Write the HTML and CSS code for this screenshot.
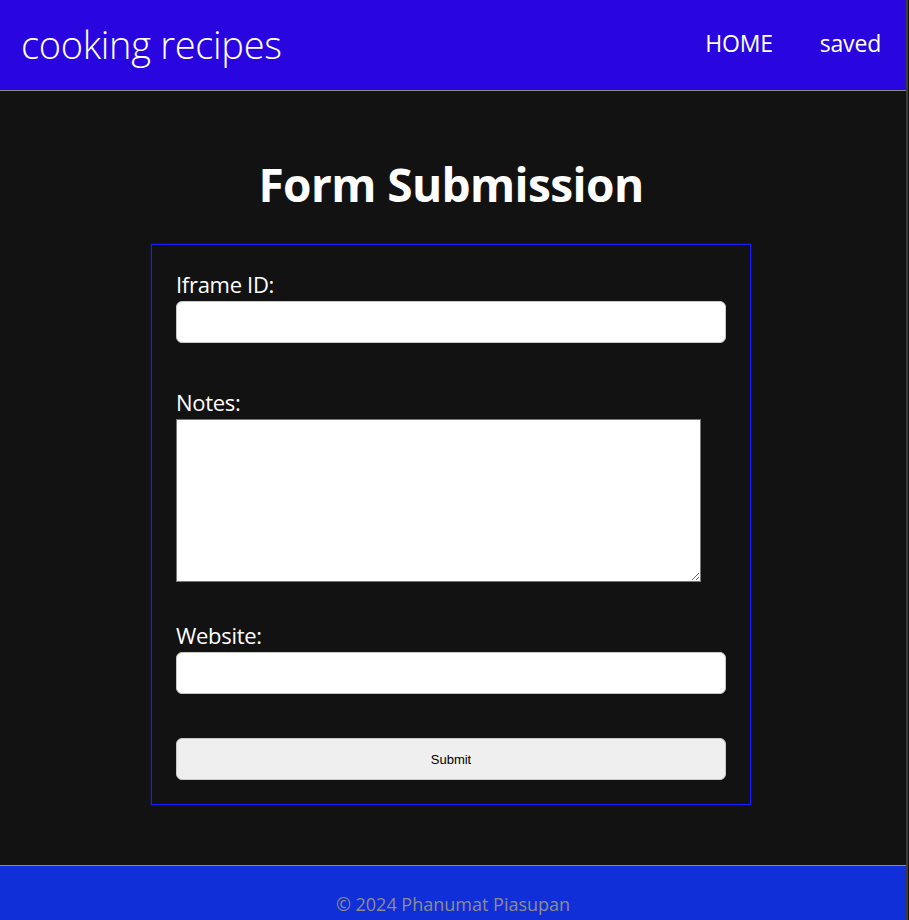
FILE: index.html
```html
<!DOCTYPE html>
<html lang="en">
<head>
<meta charset="utf-8">
<title>Form Submission</title>
<link rel="stylesheet" href="styles.css">
</head>
<body>
<div class="page">
  <header class="site-header">
    <div class="brand">cooking recipes</div>
    <nav class="nav">
      <a class="nav-link" href="#">HOME</a>
      <a class="nav-link" href="#">saved</a>
    </nav>
  </header>
  <main class="main">
    <h1 class="title">Form Submission</h1>
    <div class="card">
      <form class="form">
        <div class="group">
          <label class="label" for="iframe">Iframe ID:</label>
          <input class="field" id="iframe" type="text">
        </div>
        <div class="group group-notes">
          <label class="label" for="notes">Notes:</label>
          <textarea class="notes" id="notes"></textarea>
        </div>
        <div class="group">
          <label class="label" for="site">Website:</label>
          <input class="field" id="site" type="text">
        </div>
        <button class="submit" type="button">Submit</button>
      </form>
    </div>
  </main>
  <footer class="site-footer">
    <p class="copy">© 2024 Phanumat Piasupan</p>
  </footer>
</div>
</body>
</html>
```

FILE: styles.css
```css
* { box-sizing: border-box; }
html, body {
  margin: 0;
  padding: 0;
  background: #121212;
  height: 100%;
  overflow: hidden;
}
body {
  font-family: "Open Sans", "Noto Sans", sans-serif;
  color: #fff;
}
.page {
  margin-right: 1px;
  border-right: 2px solid #3c3c3c;
  min-height: 100%;
}
.site-header {
  height: 91px;
  background: #2906e0;
  border-bottom: 1px solid #8a8a8a;
  display: flex;
  align-items: center;
  justify-content: space-between;
  padding: 0 25px 0 21px;
}
.brand {
  font-size: 38px;
  font-weight: 300;
  letter-spacing: -0.3px;
  line-height: 1;
  margin-top: -2px;
}
.nav {
  display: flex;
  gap: 47px;
  margin-top: -4px;
}
.nav-link {
  color: #fff;
  text-decoration: none;
  font-size: 23px;
  font-weight: 400;
  letter-spacing: -0.2px;
}
.main {
  height: 774px;
  padding-top: 61px;
  padding-right: 4px;
  display: flex;
  flex-direction: column;
  align-items: center;
}
.title {
  margin: 0 0 28px;
  font-size: 46px;
  font-weight: 700;
  line-height: 64px;
  letter-spacing: -0.6px;
}
.card {
  width: 600px;
  border: 1px solid #1a1aff;
  box-shadow: 0 0 0 0.5px rgba(30, 30, 255, 0.5);
  padding: 24px;
}
.form {
  display: flex;
  flex-direction: column;
  margin: 0;
}
.group {
  display: flex;
  flex-direction: column;
  margin-bottom: 44px;
}
.group-notes { margin-bottom: 38px; }
.label {
  font-size: 22px;
  font-weight: 400;
  line-height: 30px;
  margin-bottom: 2px;
  letter-spacing: -0.3px;
}
.field {
  width: 550px;
  height: 42px;
  border: 1px solid #c8c8c8;
  border-radius: 6px;
  background: #fff;
}
.notes {
  width: 525px;
  height: 163px;
  border: 1px solid #767676;
  border-radius: 0;
  background: #fff;
  resize: both;
}
.submit {
  width: 550px;
  height: 42px;
  border: 1px solid #c8c8c8;
  border-radius: 6px;
  background: #efefef;
  font-family: "Liberation Sans", Arial, sans-serif;
  font-size: 13px;
  color: #000;
}
.site-footer {
  background: #112fd9;
  border-top: 1px solid #8a8a8a;
  height: 90px;
  padding-top: 25px;
  text-align: center;
}
.copy {
  margin: 0;
  color: #8c8c8c;
  font-size: 18px;
  line-height: 26px;
}
```
